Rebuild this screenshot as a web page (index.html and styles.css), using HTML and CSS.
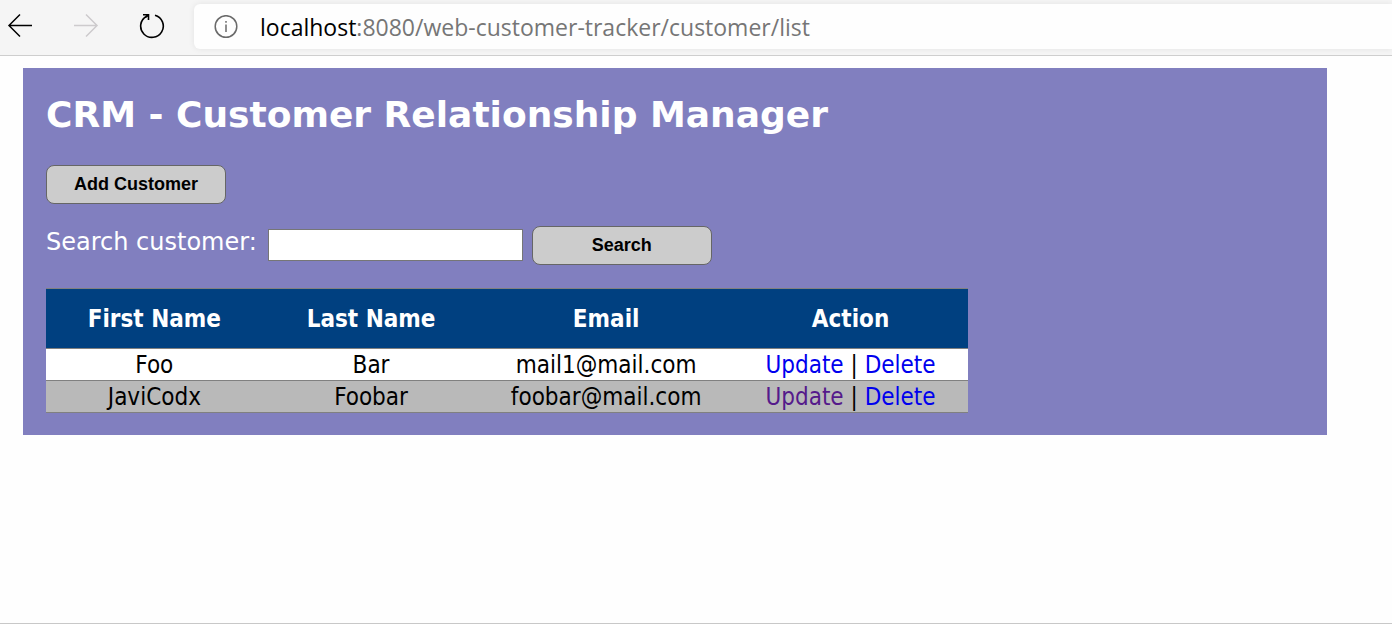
FILE: index.html
```html
<!DOCTYPE html>
<html lang="en">
<head>
<meta charset="utf-8">
<title>List Customers</title>
<link rel="stylesheet" href="styles.css">
</head>
<body>
<header class="toolbar">
  <nav class="nav-buttons">
    <button class="nav-button" type="button" aria-label="Back">
      <svg width="26" height="26" viewBox="0 0 26 26" fill="none" stroke="#000" stroke-width="1.5"><path d="M25 12.500H2M13 1.500L2 12.500l11 11"/></svg>
    </button>
    <button class="nav-button" type="button" aria-label="Forward" disabled>
      <svg width="26" height="26" viewBox="0 0 26 26" fill="none" stroke="#cdcbcd" stroke-width="1.5"><path d="M1 12.500h23M13 1.500l11 11-11 11"/></svg>
    </button>
    <button class="nav-button" type="button" aria-label="Reload">
      <svg width="26" height="26" viewBox="0 0 26 26" fill="none" stroke="#000" stroke-width="1.6"><path d="M16 2.200A11.300 11.300 0 1 1 7.500 3.200L9.500 2M4 1.800H9.500V7M9.500 1.800L6.500 4.500"/></svg>
    </button>
  </nav>
  <div class="address">
    <svg class="info" width="24" height="24" viewBox="0 0 24 24" fill="none" stroke="#6a6a6a" stroke-width="1.500"><circle cx="12" cy="11.500" r="10.800"/><path d="M12 9.500V17M12 6v1.800"/></svg>
    <span class="url"><span class="host">localhost</span>:8080/web-customer-tracker/customer/list</span>
  </div>
</header>
<main class="page">
  <section class="panel">
    <h1 class="title">CRM - Customer Relationship Manager</h1>
    <button class="button" type="button">Add Customer</button>
    <form class="search">
      <label class="search-label" for="search-name">Search customer:</label>
      <input class="search-input" id="search-name" type="text">
      <button class="button" type="button">Search</button>
    </form>
    <table class="customers">
      <colgroup><col class="col-first"><col class="col-last"><col class="col-email"><col class="col-action"></colgroup>
      <thead>
        <tr><th>First Name</th><th>Last Name</th><th>Email</th><th>Action</th></tr>
      </thead>
      <tbody>
        <tr><td>Foo</td><td>Bar</td><td>mail1@mail.com</td><td><a class="link" href="#update-1">Update</a> | <a class="link" href="#delete-1">Delete</a></td></tr>
        <tr><td>JaviCodx</td><td>Foobar</td><td>foobar@mail.com</td><td><a class="link link-visited" href="#update-2">Update</a> | <a class="link" href="#delete-2">Delete</a></td></tr>
      </tbody>
    </table>
  </section>
</main>
</body>
</html>
```
FILE: styles.css
```css
* {
  box-sizing: border-box;
}

body {
  display: flex;
  flex-direction: column;
  min-height: 100vh;
  margin: 0;
  background: #fefefe;
  border-bottom: 1px solid #c8c8c8;
  font-family: Verdana, "DejaVu Sans", sans-serif;
}

.toolbar {
  display: flex;
  align-items: flex-start;
  height: 56px;
  padding-top: 4px;
  background: #f5f5f5;
  border-bottom: 1px solid #cecece;
}

.nav-buttons {
  display: flex;
  gap: 40px;
  padding: 9px 29px 0 7px;
}

.nav-button {
  display: block;
  width: 26px;
  height: 26px;
  padding: 0;
  background: none;
  border: 0;
}

.nav-button svg {
  display: block;
}

.address {
  display: flex;
  flex: 1;
  align-items: center;
  gap: 22px;
  height: 45px;
  padding-left: 20px;
  background: #fefefe;
  border-radius: 6px 0 0 6px;
  box-shadow: 0 0 6px rgba(0, 0, 0, 0.08);
}

.url {
  color: #767676;
  font: 23px/32px "Segoe UI", "Open Sans", sans-serif;
  white-space: nowrap;
}

.host {
  color: #000;
}

.page {
  padding: 12px 65px 12px 23px;
}

.panel {
  padding: 24px 23px 22px;
  background: #817fbf;
}

.title {
  margin: 0 0 28px;
  color: #fff;
  font-size: 36px;
  line-height: 45px;
}

.button {
  display: block;
  width: 180px;
  height: 39px;
  padding: 0;
  color: #000;
  background: #ccc;
  border: 1px solid #666;
  border-radius: 8px;
  font: bold 18px "Liberation Sans", Arial, sans-serif;
}

.search {
  display: flex;
  align-items: flex-start;
  margin: 22px 0 23px;
}

.search-label {
  margin-right: 11px;
  color: #fff;
  font-size: 24px;
  line-height: 32px;
}

.search-input {
  width: 255px;
  height: 32px;
  margin: 3px 9px 0 0;
  background: #fff;
  border: 1px solid #767676;
}

.customers {
  width: 73.3%;
  table-layout: fixed;
  border-collapse: collapse;
  color: #000;
  background: #fff;
  font: 24px/29px Tahoma, "DejaVu Sans Condensed", sans-serif;
  text-align: center;
}

.col-first,
.col-last {
  width: 23.5%;
}

.col-email {
  width: 27.5%;
}

.col-action {
  width: 25.5%;
}

.customers tr {
  border-top: 1px solid #808080;
  border-bottom: 1px solid #808080;
}

.customers th {
  padding: 16px 0 14px;
  color: #fff;
  background: #004080;
}

.customers td {
  padding: 2px 0 0;
}

.customers tbody tr:nth-child(even) {
  background: #b9b9b9;
}

.link {
  color: #00e;
  text-decoration: none;
}

.link-visited {
  color: #551a8b;
}
```
